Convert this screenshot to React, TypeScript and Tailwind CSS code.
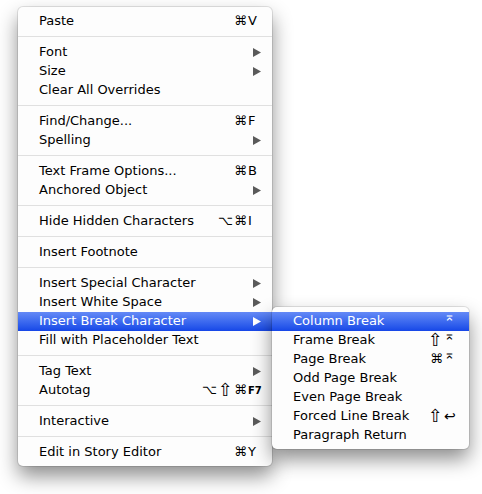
import React from 'react';

type Item =
  | { kind: 'sep' }
  | { kind: 'item'; label: string; mods?: string; keyChar?: string; fkey?: string; sub?: boolean; active?: boolean };

const sep: Item = { kind: 'sep' };
const it = (label: string, extra: Partial<Extract<Item, { kind: 'item' }>> = {}): Item => ({ kind: 'item', label, ...extra });

const mainItems: Item[] = [
  it('Paste', { mods: '⌘', keyChar: 'V' }),
  sep,
  it('Font', { sub: true }),
  it('Size', { sub: true }),
  it('Clear All Overrides'),
  sep,
  it('Find/Change...', { mods: '⌘', keyChar: 'F' }),
  it('Spelling', { sub: true }),
  sep,
  it('Text Frame Options...', { mods: '⌘', keyChar: 'B' }),
  it('Anchored Object', { sub: true }),
  sep,
  it('Hide Hidden Characters', { mods: '⌥⌘', keyChar: 'I' }),
  sep,
  it('Insert Footnote'),
  sep,
  it('Insert Special Character', { sub: true }),
  it('Insert White Space', { sub: true }),
  it('Insert Break Character', { sub: true, active: true }),
  it('Fill with Placeholder Text'),
  sep,
  it('Tag Text', { sub: true }),
  it('Autotag', { mods: '⌥⇧⌘', fkey: 'F7' }),
  sep,
  it('Interactive', { sub: true }),
  sep,
  it('Edit in Story Editor', { mods: '⌘', keyChar: 'Y' }),
];

const subItems: Item[] = [
  it('Column Break', { keyChar: '⌅', active: true }),
  it('Frame Break', { mods: '⇧', keyChar: '⌅' }),
  it('Page Break', { mods: '⌘', keyChar: '⌅' }),
  it('Odd Page Break'),
  it('Even Page Break'),
  it('Forced Line Break', { mods: '⇧', keyChar: '↩' }),
  it('Paragraph Return'),
];

const Arrow = ({ white }: { white?: boolean }) => (
  <svg width="8" height="9" viewBox="0 0 8 9" className="block">
    <polygon points="0,0 8,4.5 0,9" fill={white ? '#ffffff' : '#5a5a5a'} />
  </svg>
);

// shift glyph is drawn larger than the others, like the Mac menu font
const Mods = ({ mods }: { mods: string }) => (
  <span className="flex items-center">
    {[...mods].map((m, i) => (
      <span key={i} className={m === '⇧' ? 'mr-[1px] text-[18px] leading-none' : 'mr-[1px]'}>
        {m}
      </span>
    ))}
  </span>
);

const KeyChar = ({ ch }: { ch: string }) =>
  ch === '⌅' ? (
    <span className="relative top-[-4px] text-[13px]">{ch}</span>
  ) : ch === '↩' ? (
    <span className="text-[14px]">{ch}</span>
  ) : (
    <span>{ch}</span>
  );

const Row = ({ item, keyCol }: { item: Extract<Item, { kind: 'item' }>; keyCol: string }) => (
  <div
    className={`flex h-[19px] items-center pb-px pl-[21px] pr-[11px] leading-[18px] ${
      item.active ? 'bg-gradient-to-b from-[#6489f6] to-[#1646e7] text-white' : 'text-black'
    }`}
  >
    <span className="flex-1 whitespace-nowrap">{item.label}</span>
    {item.sub && <Arrow white={item.active} />}
    {(item.mods || item.keyChar || item.fkey) && (
      <span className="flex items-center whitespace-nowrap">
        {item.mods && <Mods mods={item.mods} />}
        <span className={`${keyCol} text-left`}>
          {item.fkey ? (
            <span className="text-[10px] font-bold">{item.fkey}</span>
          ) : (
            item.keyChar && <KeyChar ch={item.keyChar} />
          )}
        </span>
      </span>
    )}
  </div>
);

const Separator = () => (
  <div className="pb-[6px] pt-[5px]">
    <div className="h-px bg-[#e0e0e0]" />
  </div>
);

export default function App() {
  return (
    <div className="h-[494px] w-[482px] bg-white pl-[18px] pt-[7px] font-['DejaVu_Sans',sans-serif] text-[13px]">
      <div className="relative w-[254px] rounded-[5px] bg-[#fdfdfd] pb-[4px] pt-[5px] shadow-[0_10px_20px_rgba(0,0,0,0.45),0_0_0_1px_rgba(0,0,0,0.1)]">
        {mainItems.map((item, i) =>
          item.kind === 'sep' ? (
            <Separator key={i} />
          ) : item.active ? (
            <div key={i} className="relative">
              <Row item={item} keyCol="w-[13px]" />
              <div className="absolute left-full top-[-5px] z-10 w-[197px] rounded-[5px] bg-[#fdfdfd] pb-[4px] pt-[5px] shadow-[0_10px_20px_rgba(0,0,0,0.45),0_0_0_1px_rgba(0,0,0,0.1)]">
                {subItems.map((s, j) => s.kind === 'item' && <Row key={j} item={s} keyCol="w-[14px]" />)}
              </div>
            </div>
          ) : (
            <Row key={i} item={item} keyCol="w-[13px]" />
          )
        )}
      </div>
    </div>
  );
}
